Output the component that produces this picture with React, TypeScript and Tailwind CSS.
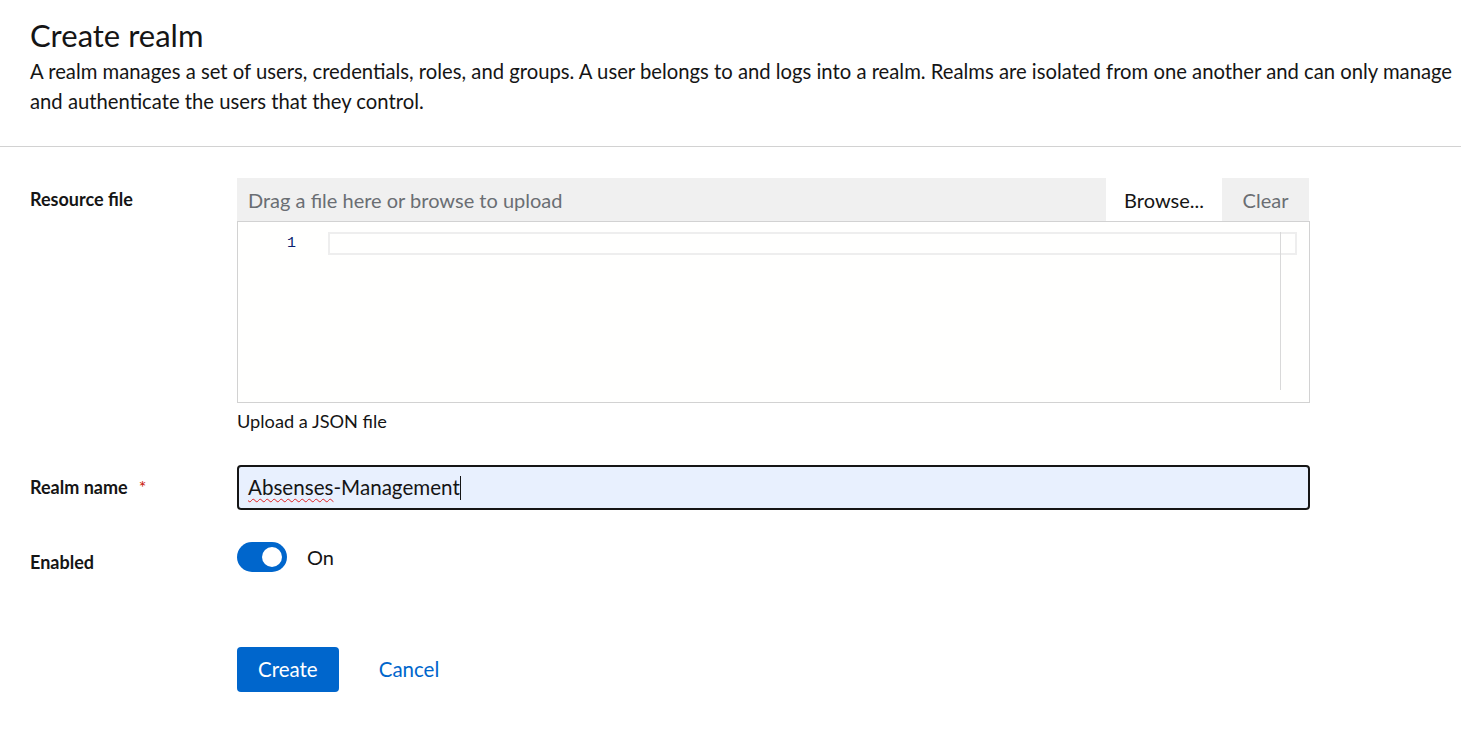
import React from "react";

export default function App() {
  const font = { fontFamily: "Lato, 'Open Sans', sans-serif" };
  return (
    <div className="min-h-screen bg-white text-[#151515]" style={font}>
      <div className="px-[30px] pt-[16px] pb-[30px]">
        <h1 className="text-[31px] leading-[39px] font-normal">Create realm</h1>
        <p className="text-[20.25px] leading-[30px] mt-[1px] text-[#151515]">
          <span className="whitespace-nowrap">
            A realm manages a set of users, credentials, roles, and groups. A user belongs to and logs into a realm. Realms are isolated from one another and can only manage
          </span>
          <br />
          <span className="whitespace-nowrap">and authenticate the users that they control.</span>
        </p>
      </div>
      <div className="h-px bg-[#d2d2d2]" />
      <div className="px-[30px] pt-[31px]">
        <div className="grid grid-cols-[207px_1073px]">
          <div className="h-[43px] flex items-center text-[18px] font-bold">Resource file</div>
          <div>
            <div className="h-[43px] flex bg-[#f0f0f0] mr-px">
              <div className="flex-1 flex items-center pl-[11px] text-[20px] text-[#6a6e73]">
                Drag a file here or browse to upload
              </div>
              <div className="w-[116px] bg-white flex items-center justify-center text-[20px] text-[#151515]">
                Browse...
              </div>
              <div className="w-[87px] flex items-center justify-center text-[20px] text-[#6a6e73]">Clear</div>
            </div>
            <div className="h-[182px] border border-[#d2d2d2] bg-[#fffffe] flex pt-[10px]">
              <div className="w-[90px] text-right pr-[32px] text-[15px] leading-[23px] text-[#0b216f]" style={{ fontFamily: "'Liberation Mono', monospace" }}>
                1
              </div>
              <div className="flex-1 relative">
                <div className="h-[23px] border-2 border-[#eeeeee] mr-[12px]" />
                <div className="absolute right-[28px] top-0 h-[158px] w-px bg-[#d9d9d9]" />
              </div>
            </div>
            <div className="text-[18.2px] leading-[26px] mt-[5px] text-[#151515]">Upload a JSON file</div>
          </div>

          <div className="mt-[31px] h-[45px] flex items-center text-[18px] font-bold">
            Realm name<span className="ml-[11px] text-[#c9190b] font-normal">*</span>
          </div>
          <div className="mt-[31px]">
            <div className="h-[45px] border-2 border-[#151515] rounded-[4px] bg-[#e8f0fe] flex items-center pl-[9px] text-[20.6px]">
              <span className="underline decoration-wavy decoration-[#e02020] decoration-1 underline-offset-[3px]">Absenses</span>
              <span>-Management</span>
              <span className="inline-block w-px h-[24px] bg-[#151515]" />
            </div>
          </div>

          <div className="mt-[32px] pt-[10px] h-[30px] box-border leading-[20px] text-[18px] font-bold">Enabled</div>
          <div className="mt-[32px] flex items-center h-[30px]">
            <div className="w-[50px] h-[30px] rounded-full bg-[#0066cc] flex items-center justify-end pr-[5px]">
              <div className="w-[20px] h-[20px] rounded-full bg-white" />
            </div>
            <span className="ml-[20px] text-[20px] text-[#151515]">On</span>
          </div>

          <div />
          <div className="mt-[75px] flex items-center">
            <button className="h-[45px] px-[21px] rounded-[4px] bg-[#0066cc] text-white text-[20.5px]">Create</button>
            <button className="ml-[20px] h-[45px] px-[20px] text-[#0066cc] text-[20.5px]">Cancel</button>
          </div>
        </div>
      </div>
    </div>
  );
}
